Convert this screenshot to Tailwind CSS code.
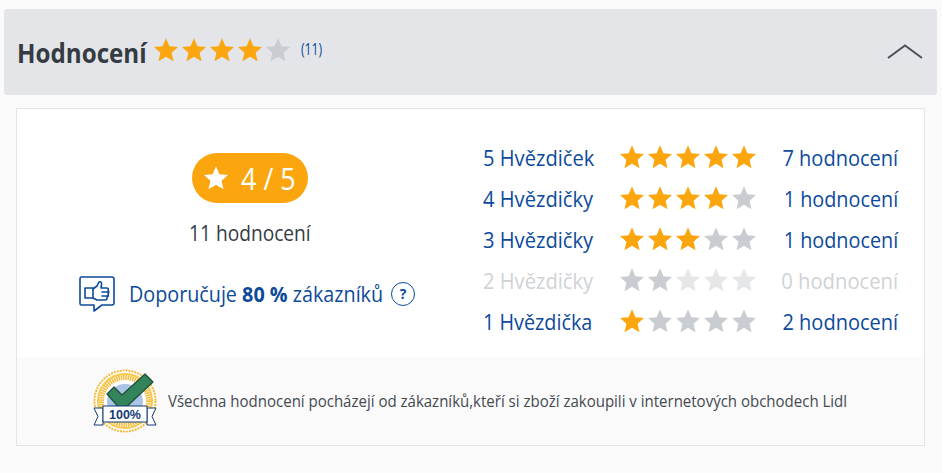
<!DOCTYPE html>
<html lang="cs">
  <head>
    <meta charset="UTF-8" />
    <meta name="viewport" content="width=device-width, initial-scale=1.0" />
    <title>Hodnocení</title>
    <script src="https://cdn.jsdelivr.net/npm/@tailwindcss/browser@4"></script>
  </head>
  <body class="bg-[#fafafa] font-['Open_Sans',sans-serif] w-[942px] h-[473px] overflow-hidden whitespace-nowrap">
    <svg class="hidden">
      <symbol id="star" viewBox="0 0 24 24">
        <polygon fill="currentColor" points="12,0.2 15.4,8.2 24,9 17.6,14.7 19.5,23.2 12,18.8 4.5,23.2 6.4,14.7 0,9 8.6,8.2" />
      </symbol>
    </svg>

    <div class="pt-[9px] pl-1 pr-[5px]">
      <!-- Header -->
      <div class="h-[86px] bg-[#e3e5e8] rounded-[3px] flex items-center pl-[13px] pr-[14px]">
        <h2 class="w-[137px] text-[26px] font-bold text-[#353b42] leading-none mt-[2px] origin-left scale-x-[.93]">Hodnocení</h2>
        <div class="flex gap-1 -mt-[4px] text-[#fba60f]">
          <svg class="w-6 h-6"><use href="#star" /></svg>
          <svg class="w-6 h-6"><use href="#star" /></svg>
          <svg class="w-6 h-6"><use href="#star" /></svg>
          <svg class="w-6 h-6"><use href="#star" /></svg>
          <svg class="w-6 h-6 text-[#c9ccd0]"><use href="#star" /></svg>
        </div>
        <span class="ml-[11px] -mt-[6px] text-[17px] text-[#0d4a9b] origin-left scale-x-[.72]">(11)</span>
        <svg class="ml-auto w-9 h-4" viewBox="0 0 36 16" fill="none" stroke="#4b5157" stroke-width="2">
          <path d="M1 14 L18 1.5 L35 14" />
        </svg>
      </div>

      <!-- Panel -->
      <div class="mt-[13px] mx-3 h-[338px] bg-white border border-[#e4e5e7] flex flex-col">
        <div class="flex h-[248px]">
          <div class="w-[466px] flex flex-col items-center pt-[44px]">
            <div class="w-[116px] h-[50px] rounded-full bg-[#fba60f] flex items-center pl-3 gap-[13px] text-white text-[31px] leading-none">
              <svg class="w-6 h-6"><use href="#star" /></svg>
              <span class="origin-left scale-x-[.87]">4 / 5</span>
            </div>
            <p class="mt-[15px] text-[22px] leading-[28px] text-[#353b42] scale-x-[.87]">11 hodnocení</p>
            <div class="mt-[30px] self-start ml-[62px] flex items-center text-[21px] text-[#0d4a9b] leading-none">
              <svg class="w-9 h-9 mr-[14px]" viewBox="0 0 36 36" fill="none" stroke="#0d4a9b" stroke-width="1.6" stroke-linejoin="round" stroke-linecap="round">
                <path d="M2 1 H33 Q35 1 35 3 V27 Q35 29 33 29 H23 L15 35 V29 H2 Q1 29 1 27 V3 Q1 1 2 1 Z" />
                <path d="M6 12 H14 V22 H6 Z" />
                <path d="M14 13 L18 10 L20 6 Q23 5 22.5 9 L22 12 H28 Q30 12.5 29 14.5 Q30.5 16 29 18 Q30 20 28 21 Q28.5 24 26 24 H18 L14 22" />
                <path d="M23 16 H29 M23 20 H28" />
              </svg>
              <span class="w-[255px] origin-left scale-x-[.94]">Doporučuje <b class="font-bold">80 %</b> zákazníků</span>
              <span class="ml-[7px] w-6 h-6 rounded-full border-[1.5px] border-[#0d4a9b] flex items-center justify-center text-[14px] font-bold">?</span>
            </div>
          </div>

          <!-- Rows -->
          <div class="w-[415px] pt-[34px] flex flex-col gap-[13px] text-[22px] leading-[28px] text-[#0d4a9b]">
            <div class="flex items-center">
              <span class="w-[137px] origin-left scale-x-[.915]">5 Hvězdiček</span>
              <div class="flex gap-1 text-[#fba60f]">
                <svg class="w-6 h-6"><use href="#star" /></svg>
                <svg class="w-6 h-6"><use href="#star" /></svg>
                <svg class="w-6 h-6"><use href="#star" /></svg>
                <svg class="w-6 h-6"><use href="#star" /></svg>
                <svg class="w-6 h-6"><use href="#star" /></svg>
              </div>
              <span class="ml-auto origin-right scale-x-[.91]">7 hodnocení</span>
            </div>
            <div class="flex items-center">
              <span class="w-[137px] origin-left scale-x-[.915]">4 Hvězdičky</span>
              <div class="flex gap-1 text-[#fba60f]">
                <svg class="w-6 h-6"><use href="#star" /></svg>
                <svg class="w-6 h-6"><use href="#star" /></svg>
                <svg class="w-6 h-6"><use href="#star" /></svg>
                <svg class="w-6 h-6"><use href="#star" /></svg>
                <svg class="w-6 h-6 text-[#c9ccd0]"><use href="#star" /></svg>
              </div>
              <span class="ml-auto origin-right scale-x-[.9]">1 hodnocení</span>
            </div>
            <div class="flex items-center">
              <span class="w-[137px] origin-left scale-x-[.915]">3 Hvězdičky</span>
              <div class="flex gap-1 text-[#fba60f]">
                <svg class="w-6 h-6"><use href="#star" /></svg>
                <svg class="w-6 h-6"><use href="#star" /></svg>
                <svg class="w-6 h-6"><use href="#star" /></svg>
                <svg class="w-6 h-6 text-[#c9ccd0]"><use href="#star" /></svg>
                <svg class="w-6 h-6 text-[#c9ccd0]"><use href="#star" /></svg>
              </div>
              <span class="ml-auto origin-right scale-x-[.9]">1 hodnocení</span>
            </div>
            <div class="flex items-center text-[#d0d2d5]">
              <span class="w-[137px] origin-left scale-x-[.915]">2 Hvězdičky</span>
              <div class="flex gap-1 text-[#e6e7e9]">
                <svg class="w-6 h-6 text-[#c9ccd0]"><use href="#star" /></svg>
                <svg class="w-6 h-6 text-[#c9ccd0]"><use href="#star" /></svg>
                <svg class="w-6 h-6"><use href="#star" /></svg>
                <svg class="w-6 h-6"><use href="#star" /></svg>
                <svg class="w-6 h-6"><use href="#star" /></svg>
              </div>
              <span class="ml-auto origin-right scale-x-[.92]">0 hodnocení</span>
            </div>
            <div class="flex items-center">
              <span class="w-[137px] origin-left scale-x-[.9]">1 Hvězdička</span>
              <div class="flex gap-1 text-[#c9ccd0]">
                <svg class="w-6 h-6 text-[#fba60f]"><use href="#star" /></svg>
                <svg class="w-6 h-6"><use href="#star" /></svg>
                <svg class="w-6 h-6"><use href="#star" /></svg>
                <svg class="w-6 h-6"><use href="#star" /></svg>
                <svg class="w-6 h-6"><use href="#star" /></svg>
              </div>
              <span class="ml-auto origin-right scale-x-[.91]">2 hodnocení</span>
            </div>
          </div>
        </div>

        <!-- Footer -->
        <div class="flex-1 bg-[#fafafa] flex items-center pl-[76px] gap-[11px]">
          <svg class="w-[64px] h-[64px]" viewBox="0 0 64 64">
            <circle cx="32" cy="32" r="30.5" fill="#fff" stroke="#f6b93b" stroke-width="2" stroke-dasharray="2 1" />
            <circle cx="32" cy="32" r="27" fill="none" stroke="#f8c84a" stroke-width="2" />
            <circle cx="32" cy="32" r="23.5" fill="none" stroke="#f6bb3a" stroke-width="5" stroke-dasharray="1.5 0.8" />
            <circle cx="32" cy="32" r="20" fill="#fff" />
            <circle cx="32" cy="33" r="18" fill="#a9c4e6" />
            <path d="M14 25 L21 18 L29 26 L52 5 L60 13 L29 42 Z" fill="#33845a" stroke="#1f4f38" stroke-width="1.2" stroke-linejoin="round" />
            <path d="M1 39 H10 V56 H1 L5 47.5 Z M63 39 H54 V56 H63 L59 47.5 Z" fill="#fff" stroke="#123a76" stroke-width="1" />
            <rect x="10" y="37" width="44" height="16" fill="#fff" stroke="#123a76" stroke-width="1" />
            <text x="32" y="50" text-anchor="middle" font-family="Liberation Sans" font-weight="700" font-size="12.5" fill="#123a76">100%</text>
          </svg>
          <p class="text-[16px] text-[#44494f] leading-none origin-left scale-x-[.938]">Všechna hodnocení pocházejí od zákazníků,kteří si zboží zakoupili v internetových obchodech Lidl</p>
        </div>
      </div>
    </div>
  </body>
</html>
